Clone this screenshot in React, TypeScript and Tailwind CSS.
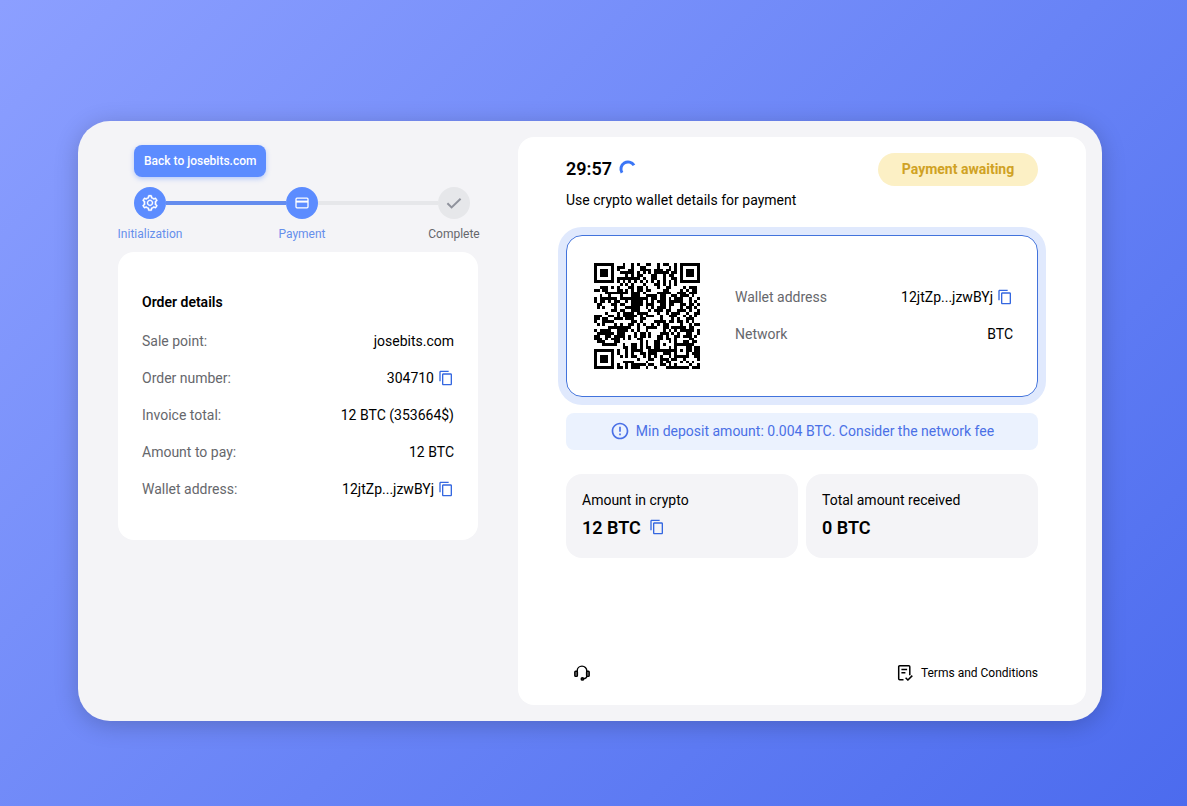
import type { ReactNode } from "react";
import { AiOutlineSetting } from "react-icons/ai";
import { MdContentCopy, MdErrorOutline } from "react-icons/md";

const QR_SIZE = 37;

// dark/light state of one module inside a square marker of the given radius
function inMarker(x: number, y: number, cx: number, cy: number, radius: number) {
	const d = Math.max(Math.abs(x - cx), Math.abs(y - cy));
	if (d > radius) return null;
	return radius === 4 ? d === 3 || d < 2 : d !== 1;
}

function qrPath() {
	let seed = 304710;
	let path = "";
	for (let y = 0; y < QR_SIZE; y++) {
		for (let x = 0; x < QR_SIZE; x++) {
			seed = (seed * 1103515245 + 12345) % 2147483648;
			const dark =
				inMarker(x, y, 3, 3, 4) ??
				inMarker(x, y, 33, 3, 4) ??
				inMarker(x, y, 3, 33, 4) ??
				inMarker(x, y, 30, 30, 2) ??
				(x === 6 || y === 6 ? (x + y) % 2 === 0 : seed / 2147483648 < 0.52);
			if (dark) path += `M${x} ${y}h1v1h-1z`;
		}
	}
	return path;
}

function QrCode() {
	return (
		<svg
			viewBox="-1 -1 39 39"
			className="size-28 shrink-0"
			shapeRendering="crispEdges"
			role="img"
			aria-label="QR code"
		>
			<path d={qrPath()} />
		</svg>
	);
}

function CopyButton({ label }: { label: string }) {
	return (
		<button type="button" aria-label={label} className="cursor-pointer pb-px text-[#3467e0]">
			<MdContentCopy className="size-4" />
		</button>
	);
}

type RowProps = { label: string; value: string; copy?: boolean };

function Row({ label, value, copy }: RowProps) {
	return (
		<div className="flex items-center justify-between gap-4">
			<dt className="text-[#66676c]">{label}</dt>
			<dd className="flex items-center gap-1">
				{value}
				{copy && <CopyButton label={`Copy ${label}`} />}
			</dd>
		</div>
	);
}

type StepProps = { label: string; icon: ReactNode; active?: boolean };

function Step({ label, icon, active }: StepProps) {
	return (
		<li className="flex w-8 shrink-0 flex-col items-center gap-1.5">
			<span
				className={
					active
						? "flex size-8 items-center justify-center rounded-full bg-[#5c8cff] text-white"
						: "flex size-8 items-center justify-center rounded-full bg-[#e6e7ea] text-[#8f929c]"
				}
			>
				{icon}
			</span>
			<span
				className={
					active
						? "text-xs leading-[18px] whitespace-nowrap text-[#668fec]"
						: "text-xs leading-[18px] whitespace-nowrap text-[#66676c]"
				}
			>
				{label}
			</span>
		</li>
	);
}

function CardIcon() {
	return (
		<svg viewBox="0 0 16 16" className="size-4" fill="none" stroke="currentColor" aria-hidden="true">
			<rect x="2" y="3.2" width="12" height="9.6" rx="1" strokeWidth="1.3" />
			<path d="M2 6.6h12" strokeWidth="2" />
		</svg>
	);
}

function CheckIcon() {
	return (
		<svg viewBox="0 0 16 16" className="size-4" fill="none" stroke="currentColor" aria-hidden="true">
			<path d="m1.4 8.2 4.2 4.2 9-8.7" strokeWidth="2" />
		</svg>
	);
}

function Spinner() {
	return (
		<svg viewBox="0 0 16 16" className="size-4 overflow-visible" fill="none" aria-hidden="true">
			<path d="M2 11.8A6.7 6.7 0 0 1 14 4.3" stroke="#3b76f6" strokeWidth="3" />
		</svg>
	);
}

function HeadsetIcon() {
	return (
		<svg viewBox="0 0 16 16" className="size-4" fill="none" stroke="currentColor" strokeWidth="1.4">
			<path d="M3.2 7V5.9a4.8 4.8 0 0 1 9.6 0V11c0 1.8-1.4 2.6-3.8 2.8" />
			<rect x=".8" y="6.2" width="2.6" height="5.2" rx=".8" fill="#777" />
			<rect x="12.6" y="6.2" width="2.6" height="5.2" rx=".8" fill="#777" />
			<circle cx="8.4" cy="13.9" r="1.2" fill="#333" />
		</svg>
	);
}

function TermsIcon() {
	return (
		<svg viewBox="0 0 16 16" className="size-4" fill="none" stroke="currentColor" strokeWidth="1.5">
			<path d="M6.5 14.7H2.7a1 1 0 0 1-1-1V1.8a1 1 0 0 1 1-1h9.1a1 1 0 0 1 1 1v8.4" />
			<path d="M4.4 4.4h5.7M4.4 7.7h4" />
			<path d="m8.6 12.7 2.3 2.3 4.4-4.4" />
		</svg>
	);
}

export default function App() {
	return (
		<div className="min-h-screen bg-linear-135 from-[#8c9fff] to-[#4c6bee] pt-[121px] pr-[7px] pb-20 font-['Roboto',sans-serif] text-sm leading-[21px] text-black">
			<main className="mx-auto flex min-h-[600px] max-w-5xl rounded-[32px] bg-[#f4f4f7] py-4 pr-4 shadow-[0_4px_24px_rgba(0,0,0,0.2)]">
				<section className="w-[440px] shrink-0 px-10 pt-2">
					<button
						type="button"
						className="ml-4 h-8 cursor-pointer rounded-lg bg-[#5c8cff] px-2.5 text-xs font-medium text-white shadow-[0_2px_5px_rgba(92,140,255,0.4)]"
					>
						Back to josebits.com
					</button>

					<ol className="mt-2.5 flex pr-2 pl-4">
						<Step
							label="Initialization"
							icon={<AiOutlineSetting className="size-[18px]" strokeWidth={20} />}
							active
						/>
						<li aria-hidden="true" className="mt-3.5 h-1 flex-1 bg-[#648cee]" />
						<Step label="Payment" icon={<CardIcon />} active />
						<li aria-hidden="true" className="mt-3.5 h-1 flex-1 bg-[#e6e7ea]" />
						<Step label="Complete" icon={<CheckIcon />} />
					</ol>

					<div className="mt-[9px] rounded-2xl bg-white px-6 py-10">
						<h2 className="mb-[18px] font-semibold">Order details</h2>
						<dl className="flex flex-col gap-4">
							<Row label="Sale point:" value="josebits.com" />
							<Row label="Order number:" value="304710" copy />
							<Row label="Invoice total:" value="12 BTC (353664$)" />
							<Row label="Amount to pay:" value="12 BTC" />
							<Row label="Wallet address:" value="12jtZp...jzwBYj" copy />
						</dl>
					</div>
				</section>

				<section className="flex flex-1 flex-col rounded-2xl bg-white px-12 pt-4 pb-5">
					<header className="flex items-start justify-between">
						<div className="flex items-center gap-2">
							<span className="text-lg leading-[31px] font-semibold">29:57</span>
							<Spinner />
						</div>
						<span className="flex h-[33px] w-40 items-center justify-center rounded-full bg-[#fcf0c5] font-bold text-[#d0a224]">
							Payment awaiting
						</span>
					</header>
					<p className="mt-1">Use crypto wallet details for payment</p>

					<div className="mt-6 flex items-center gap-8 rounded-2xl border border-[#4273dc] p-6 ring-8 ring-[#e0e9fd]">
						<QrCode />
						<dl className="flex flex-1 flex-col gap-4">
							<Row label="Wallet address" value="12jtZp...jzwBYj" copy />
							<Row label="Network" value="BTC" />
						</dl>
					</div>

					<p className="mt-4 flex items-start justify-center gap-1.5 rounded-lg bg-[#ebf2fe] py-2 text-[#4a70e6]">
						<MdErrorOutline className="size-5" />
						Min deposit amount: 0.004 BTC. Consider the network fee
					</p>

					<div className="mt-6 grid grid-cols-2 gap-2">
						<div className="rounded-2xl bg-[#f4f4f7] px-4 pt-4 pb-[18px]">
							<p>Amount in crypto</p>
							<p className="mt-1 flex items-center gap-2 text-lg leading-[25px] font-semibold">
								12 BTC
								<CopyButton label="Copy amount" />
							</p>
						</div>
						<div className="rounded-2xl bg-[#f4f4f7] px-4 pt-4 pb-[18px]">
							<p>Total amount received</p>
							<p className="mt-1 text-lg leading-[25px] font-semibold">0 BTC</p>
						</div>
					</div>

					<footer className="mt-auto flex items-center justify-between">
						<button
							type="button"
							aria-label="Support"
							className="flex h-6 w-8 cursor-pointer items-center justify-center"
						>
							<HeadsetIcon />
						</button>
						<a href="#terms" className="flex items-center gap-2 text-xs">
							<TermsIcon />
							Terms and Conditions
						</a>
					</footer>
				</section>
			</main>
		</div>
	);
}
